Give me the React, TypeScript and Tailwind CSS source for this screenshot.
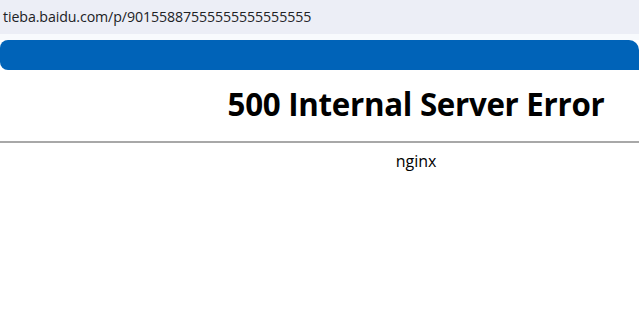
import React from 'react';

const url = 'tieba.baidu.com/p/90155887555555555555555';

export default function App() {
  return (
    <div className="w-[639px] h-[330px] overflow-hidden bg-white font-['Open_Sans','Noto_Sans',sans-serif]">
      {/* address bar */}
      <div className="h-[34px] bg-[#eceef6] flex items-center pl-[3px]">
        <span className="text-[14.2px] text-[#202124] tracking-[-0.1px]">{url}</span>
      </div>
      <div className="h-[6px] bg-[#f8fafd]" />
      {/* bookmark bar */}
      <div className="h-[30px] bg-[#0063b8] rounded-l-[8px] rounded-tr-[10px]" />

      {/* page content, wider than the viewport */}
      <div className="w-[832px] text-center text-black">
        <h1 className="pt-[15px] pb-[18px] text-[31.3px] leading-[38px] font-bold tracking-[-0.3px]">
          500 Internal Server Error
        </h1>
        <hr className="border-0 border-t-2 border-[#a8a8a8]" />
        <p className="pt-[7px] text-[16px] leading-[22px]">nginx</p>
      </div>
    </div>
  );
}
